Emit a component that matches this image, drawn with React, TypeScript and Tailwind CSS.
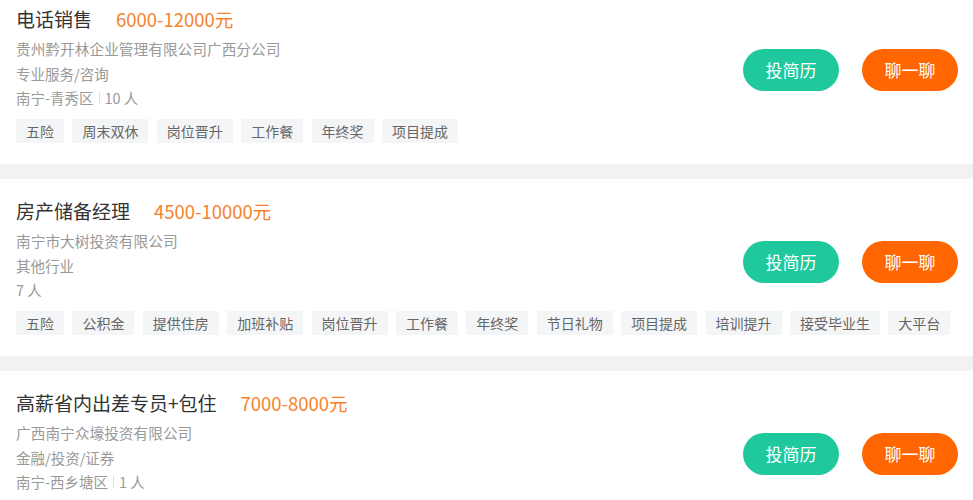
import React from "react";

type Job = {
  title: string;
  salary: string;
  company: string;
  industry: string;
  location?: string;
  count: string;
  tags: string[];
};

const jobs: Job[] = [
  {
    title: "电话销售",
    salary: "6000-12000元",
    company: "贵州黔开林企业管理有限公司广西分公司",
    industry: "专业服务/咨询",
    location: "南宁-青秀区",
    count: "10 人",
    tags: ["五险", "周末双休", "岗位晋升", "工作餐", "年终奖", "项目提成"],
  },
  {
    title: "房产储备经理",
    salary: "4500-10000元",
    company: "南宁市大树投资有限公司",
    industry: "其他行业",
    count: "7 人",
    tags: ["五险", "公积金", "提供住房", "加班补贴", "岗位晋升", "工作餐", "年终奖", "节日礼物", "项目提成", "培训提升", "接受毕业生", "大平台"],
  },
  {
    title: "高薪省内出差专员+包住",
    salary: "7000-8000元",
    company: "广西南宁众壕投资有限公司",
    industry: "金融/投资/证券",
    location: "南宁-西乡塘区",
    count: "1 人",
    tags: [],
  },
];

function Card({ job }: { job: Job }) {
  return (
    <div className="bg-white pl-4 pr-[15px] pt-[18px] pb-[21px]">
      <div className="flex items-start justify-between">
        <div className="flex flex-col">
          <div className="flex items-center h-[28px]">
            <span className="text-[19px] text-[#333333] leading-[28px]">{job.title}</span>
            <span className="ml-[24px] text-[18.5px] text-[#f7822b] leading-[28px]">{job.salary}</span>
          </div>
          <div className="mt-[4px] text-[14.7px] leading-[24.5px] text-[#999999]">{job.company}</div>
          <div className="text-[14.5px] leading-[24.5px] text-[#999999]">{job.industry}</div>
          <div className="flex items-center text-[14.5px] leading-[24px] text-[#999999]">
            {job.location && (
              <>
                <span>{job.location}</span>
                <span className="mx-[5px] inline-block w-px h-[12px] bg-[#e0e0e0]" />
              </>
            )}
            <span>{job.count}</span>
          </div>
        </div>
        <div className="flex gap-[23px] mt-[44px]">
          <button className="w-[96px] h-[42px] rounded-full bg-[#1fc89d] text-white text-[17px]">投简历</button>
          <button className="w-[96px] h-[42px] rounded-full bg-[#ff6600] text-white text-[17px]">聊一聊</button>
        </div>
      </div>
      {job.tags.length > 0 && (
        <div className="mt-[9px] flex flex-wrap gap-[8.4px]">
          {job.tags.map((t) => (
            <span key={t} className="h-[24px] px-[10px] bg-[#f4f5f7] text-[14px] leading-[24px] text-[#666666]">
              {t}
            </span>
          ))}
        </div>
      )}
    </div>
  );
}

export default function App() {
  return (
    <div
      className="w-[973px] h-[500px] overflow-hidden bg-[#f2f2f2]"
      style={{ fontFamily: '"Noto Sans CJK SC", "Noto Sans", sans-serif' }}
    >
      <div className="-mt-[13px] flex flex-col gap-[15px]">
        {jobs.map((j) => (
          <Card key={j.title} job={j} />
        ))}
      </div>
    </div>
  );
}
